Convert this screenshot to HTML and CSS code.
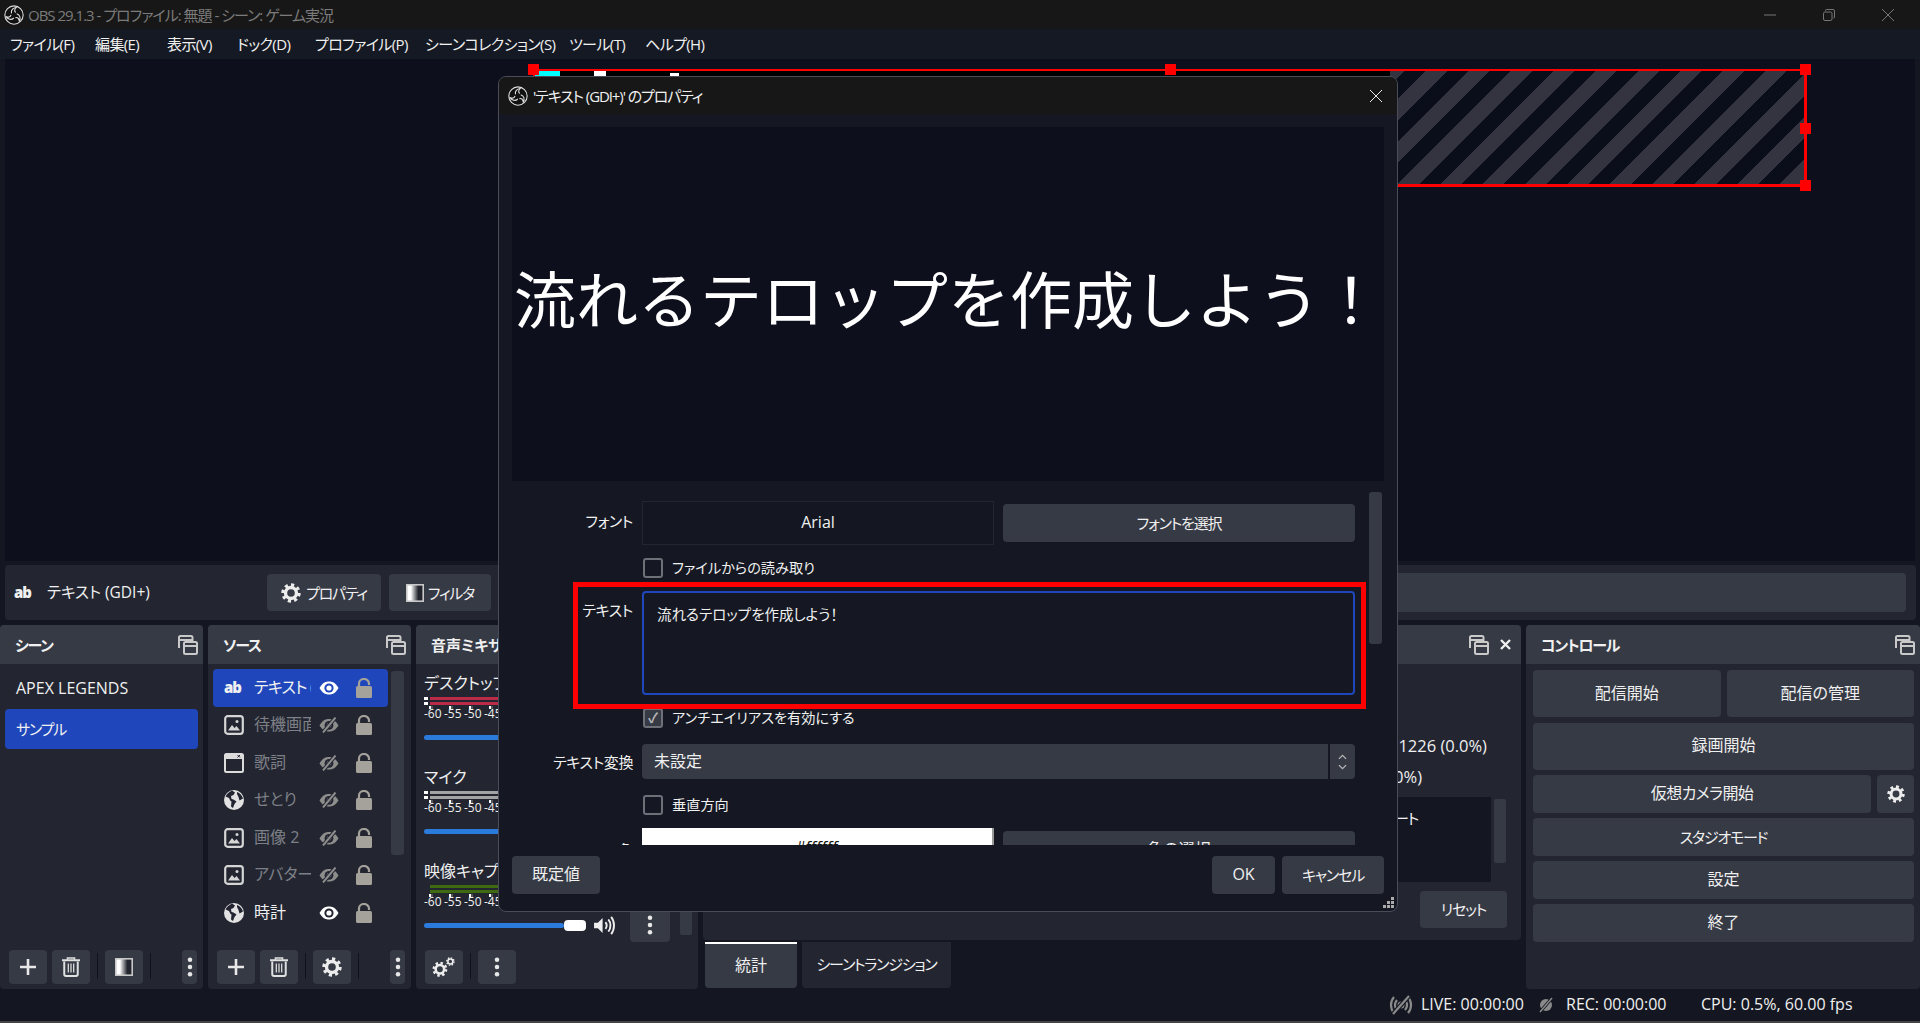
FILE: index.html
```html
<!DOCTYPE html>
<html lang="ja">
<head>
    <meta charset="UTF-8">
    <title>OBS 29.1.3</title>
    <link rel="stylesheet" href="styles.css">
</head>
<body>
    <svg class="sprite" aria-hidden="true">
        <defs>
            <linearGradient id="fade"><stop offset=".25" stop-color="#fff"/><stop offset=".7" stop-color="#23252e"/></linearGradient>
            <symbol id="i-obs" viewBox="0 0 24 24">
                <circle cx="12" cy="12" r="11" fill="#111" stroke="#ddd" stroke-width="1.3"/>
                <g fill="none" stroke="#ddd" stroke-width="1.3">
                    <path d="M9 10C8 6 11 3 15.5 2.6 12.5 4.5 12 7 14 9"/>
                    <path d="M9 10C8 6 11 3 15.5 2.6 12.5 4.5 12 7 14 9" transform="rotate(120 12 12)"/>
                    <path d="M9 10C8 6 11 3 15.5 2.6 12.5 4.5 12 7 14 9" transform="rotate(240 12 12)"/>
                </g>
            </symbol>
            <symbol id="i-popout" viewBox="0 0 20 20">
                <path d="M1 13V2.500A1.500 1.500 0 0 1 2.500 1H13A1.500 1.500 0 0 1 14.500 2.500V6M1 5H14.500" fill="none" stroke="#c9c9c9" stroke-width="2"/>
                <rect x="6" y="7" width="13" height="12" rx="1.500" fill="none" stroke="#c9c9c9" stroke-width="2"/>
                <path d="M6 11H19" stroke="#c9c9c9" stroke-width="2"/>
            </symbol>
            <symbol id="i-eye" viewBox="0 0 20 14">
                <path d="M.5 7C4 1 7 .5 10 .5S16 1 19.500 7C16 13 13 13.500 10 13.500S4 13 .5 7Z" fill="#fff"/>
                <circle cx="10" cy="7" r="4.600" fill="#1f47bb"/>
                <circle cx="10" cy="7" r="2.600" fill="#fff"/>
            </symbol>
            <symbol id="i-eye-dark" viewBox="0 0 20 14">
                <path d="M.5 7C4 1 7 .5 10 .5S16 1 19.500 7C16 13 13 13.500 10 13.500S4 13 .5 7Z" fill="#fff"/>
                <circle cx="10" cy="7" r="4.600" fill="#222531"/>
                <circle cx="10" cy="7" r="2.600" fill="#fff"/>
            </symbol>
            <symbol id="i-eye-off" viewBox="0 0 20 16">
                <path d="M.5 8.500C4 2.500 7 2 10 2S16 2.500 19.500 8.500C16 14 13 14.500 10 14.500S4 14 .5 8.500Z" fill="#8d8d8c"/>
                <circle cx="10" cy="8.300" r="4.400" fill="#222531"/>
                <circle cx="10" cy="8.300" r="2.400" fill="#8d8d8c"/>
                <path d="M4 15.500 16.500 .5" stroke="#222531" stroke-width="4"/>
                <path d="M4 15.500 16.500 .5" stroke="#8d8d8c" stroke-width="2"/>
            </symbol>
            <symbol id="i-lock" viewBox="0 0 16 20">
                <path d="M3 9V5.500a5 4.500 0 0 1 10 0V7" fill="none" stroke="#a5a29c" stroke-width="2.200"/>
                <rect y="8" width="16" height="12" rx="1.500" fill="#a5a29c"/>
            </symbol>
            <symbol id="i-image" viewBox="0 0 20 20">
                <rect x="1.200" y="1.200" width="17.600" height="17.600" rx="2.500" fill="none" stroke="#d5d5d5" stroke-width="2.200"/>
                <path d="M4 15.500 8 10l2.500 3 2-2 3.500 4.500Z" fill="#d5d5d5"/>
                <circle cx="13" cy="6.500" r="1.500" fill="#d5d5d5"/>
            </symbol>
            <symbol id="i-window" viewBox="0 0 20 20">
                <rect x="1" y="1" width="18" height="18" rx="1.500" fill="none" stroke="#dcdcdc" stroke-width="2"/>
                <path d="M1 1H19V6H1Z" fill="#dcdcdc"/>
                <path d="M13.500 2 16 4.500M16 2l-2.500 2.500" stroke="#222531"/>
            </symbol>
            <symbol id="i-globe" viewBox="0 0 20 20">
                <circle cx="10" cy="10" r="10" fill="#e2e2e2"/>
                <path d="M8 .5C5 2 3 3.500 1.500 6.500L5 8l1.500 3 1 .5-.5 5L9 18l1.500-4 2-2.500-3-2-2-.5L7 6l2.500-1L11 2.500ZM13 4l1.500 3 1 3.500 3.500-2C18 5.500 16 3 13 2Z" fill="#222531"/>
            </symbol>
            <symbol id="i-plus" viewBox="0 0 18 18">
                <path d="M9 1V17M1 9H17" stroke="#e8e8e8" stroke-width="2.600"/>
            </symbol>
            <symbol id="i-trash" viewBox="0 0 20 22">
                <path d="M0 3.500H20" stroke="#e0e0e0" stroke-width="2.200"/>
                <path d="M6 3V1H14V3" fill="none" stroke="#e0e0e0" stroke-width="1.600"/>
                <path d="M2.500 5V19a2 2 0 0 0 2 2H15.500a2 2 0 0 0 2-2V5" fill="none" stroke="#e0e0e0" stroke-width="2.200"/>
                <path d="M7 7V17M10 7V17M13 7V17" stroke="#e0e0e0" stroke-width="1.400"/>
            </symbol>
            <symbol id="i-filter" viewBox="0 0 18 18">
                <rect x=".8" y=".8" width="16.400" height="16.400" fill="url(#fade)" stroke="#c8c8c8" stroke-width="1.600"/>
            </symbol>
            <symbol id="i-gear" viewBox="0 0 20 20">
                <circle cx="10" cy="10" r="5.500" fill="none" stroke="#ececec" stroke-width="3.400"/>
                <circle cx="10" cy="10" r="8" fill="none" stroke="#ececec" stroke-width="3.400" pathLength="16" stroke-dasharray="1 1"/>
            </symbol>
            <symbol id="i-dots" viewBox="0 0 6 22">
                <circle cx="3" cy="3" r="2.500" fill="#e8e8e8"/>
                <circle cx="3" cy="11" r="2.500" fill="#e8e8e8"/>
                <circle cx="3" cy="19" r="2.500" fill="#e8e8e8"/>
            </symbol>
            <symbol id="i-speaker" viewBox="0 0 22 20">
                <path d="M0 7H4L9 2V18L4 13H0Z" fill="#eee"/>
                <path d="M12 6.500C13.500 8.500 13.500 11.500 12 13.500M15 3.500C18 7 18 13 15 16.500M18 1C22 6 22 14 18 19" fill="none" stroke="#eee" stroke-width="2"/>
            </symbol>
            <symbol id="i-live" viewBox="0 0 24 20">
                <path d="M5 2C1 6.500 1 13.500 5 18M8 5C5.500 8 5.500 12 8 15M19 2C23 6.500 23 13.500 19 18M16 5C18.500 8 18.500 12 16 15" fill="none" stroke="#8a8a8a" stroke-width="2.200"/>
                <circle cx="12" cy="10" r="3.500" fill="#8a8a8a"/>
                <path d="M4 19 20 1" stroke="#141722" stroke-width="4.500"/>
                <path d="M4 19 20 1" stroke="#8a8a8a" stroke-width="2.200"/>
            </symbol>
            <symbol id="i-rec" viewBox="0 0 14 16">
                <circle cx="7" cy="8" r="6" fill="#8a8a8a"/>
                <path d="M1 15 13 1" stroke="#141722" stroke-width="3"/>
                <path d="M1 15 13 1" stroke="#8a8a8a" stroke-width="1.500"/>
            </symbol>
        </defs>
    </svg>

    <div class="titlebar">
        <svg class="title-logo"><use href="#i-obs"/></svg>
        <span class="title-text">OBS 29.1.3 - プロファイル: 無題 - シーン: ゲーム実況</span>
        <div class="window-buttons">
            <svg viewBox="0 0 12 12"><path d="M0 6H12" stroke="#777" stroke-width="1"/></svg>
            <svg viewBox="0 0 12 12"><path d="M2.500 2V1.500a1 1 0 0 1 1-1H10a1.500 1.500 0 0 1 1.500 1.500V8a1 1 0 0 1-1 1" fill="none" stroke="#777"/><rect x=".5" y="3" width="8.500" height="8.500" rx="1.500" fill="none" stroke="#777"/></svg>
            <svg viewBox="0 0 12 12"><path d="M0 0 12 12M12 0 0 12" stroke="#777"/></svg>
        </div>
    </div>

    <nav class="menubar">
        <span>ファイル(F)</span>
        <span>編集(E)</span>
        <span>表示(V)</span>
        <span>ドック(D)</span>
        <span>プロファイル(P)</span>
        <span>シーンコレクション(S)</span>
        <span>ツール(T)</span>
        <span>ヘルプ(H)</span>
    </nav>

    <section class="preview">
        <div class="selection">
            <div class="source-text">
                <i class="bit bit-cyan"></i>
                <i class="bit bit-white-a"></i>
                <i class="bit bit-white-b"></i>
            </div>
            <i class="handle handle-tl"></i>
            <i class="handle handle-tm"></i>
            <i class="handle handle-tr"></i>
            <i class="handle handle-mr"></i>
            <i class="handle handle-br"></i>
        </div>
    </section>

    <section class="context-bar">
        <b class="ab-icon">ab</b>
        <span class="context-name">テキスト (GDI+)</span>
        <button class="btn btn-props"><svg class="ico-20"><use href="#i-gear"/></svg><span class="tight">プロパティ</span></button>
        <button class="btn btn-filter"><svg class="ico-18"><use href="#i-filter"/></svg><span class="tight">フィルタ</span></button>
        <div class="context-field"></div>
    </section>

    <main class="docks">
        <section class="dock dock-scenes">
            <header class="dock-head"><span class="tight">シーン</span><svg class="popout"><use href="#i-popout"/></svg></header>
            <div class="dock-body scene-list">
                <div class="scene">APEX LEGENDS</div>
                <div class="scene selected"><span class="tight">サンプル</span></div>
            </div>
            <div class="toolbar">
                <button class="tool"><svg class="ico-18"><use href="#i-plus"/></svg></button>
                <button class="tool"><svg class="ico-trash"><use href="#i-trash"/></svg></button>
                <i class="tool-sep"></i>
                <button class="tool"><svg class="ico-18"><use href="#i-filter"/></svg></button>
                <i class="tool-sep"></i>
                <button class="tool tool-dots"><svg class="ico-dots"><use href="#i-dots"/></svg></button>
            </div>
        </section>

        <section class="dock dock-sources">
            <header class="dock-head"><span class="tight">ソース</span><svg class="popout"><use href="#i-popout"/></svg></header>
            <div class="dock-body source-wrap">
                <div class="source-list">
                    <div class="source selected"><b class="ab-icon src-icon">ab</b><span class="src-name">テキスト (GDI+)</span><svg class="eye"><use href="#i-eye"/></svg><svg class="lock"><use href="#i-lock"/></svg></div>
                    <div class="source off"><svg class="src-icon"><use href="#i-image"/></svg><span class="src-name">待機画面</span><svg class="eye"><use href="#i-eye-off"/></svg><svg class="lock"><use href="#i-lock"/></svg></div>
                    <div class="source off"><svg class="src-icon"><use href="#i-window"/></svg><span class="src-name">歌詞</span><svg class="eye"><use href="#i-eye-off"/></svg><svg class="lock"><use href="#i-lock"/></svg></div>
                    <div class="source off"><svg class="src-icon"><use href="#i-globe"/></svg><span class="src-name">せとり</span><svg class="eye"><use href="#i-eye-off"/></svg><svg class="lock"><use href="#i-lock"/></svg></div>
                    <div class="source off"><svg class="src-icon"><use href="#i-image"/></svg><span class="src-name">画像 2</span><svg class="eye"><use href="#i-eye-off"/></svg><svg class="lock"><use href="#i-lock"/></svg></div>
                    <div class="source off"><svg class="src-icon"><use href="#i-image"/></svg><span class="src-name">アバター</span><svg class="eye"><use href="#i-eye-off"/></svg><svg class="lock"><use href="#i-lock"/></svg></div>
                    <div class="source"><svg class="src-icon"><use href="#i-globe"/></svg><span class="src-name">時計</span><svg class="eye"><use href="#i-eye-dark"/></svg><svg class="lock"><use href="#i-lock"/></svg></div>
                </div>
                <div class="source-scroll"></div>
            </div>
            <div class="toolbar">
                <button class="tool"><svg class="ico-18"><use href="#i-plus"/></svg></button>
                <button class="tool"><svg class="ico-trash"><use href="#i-trash"/></svg></button>
                <i class="tool-sep"></i>
                <button class="tool"><svg class="ico-20"><use href="#i-gear"/></svg></button>
                <i class="tool-sep"></i>
                <button class="tool tool-dots"><svg class="ico-dots"><use href="#i-dots"/></svg></button>
            </div>
        </section>

        <section class="dock dock-mixer">
            <header class="dock-head">音声ミキサー</header>
            <div class="dock-body mixer-body">
                <div class="channel">
                    <div class="ch-name">デスクトップ音声</div>
                    <div class="meter meter-red"><i></i><i></i></div>
                    <div class="ticks"></div>
                    <div class="scale"><span>-60</span><span>-55</span><span>-50</span><span>-45</span></div>
                    <div class="fader"><i class="fader-track"></i></div>
                </div>
                <div class="channel">
                    <div class="ch-name">マイク</div>
                    <div class="meter meter-gray"><i></i><i></i></div>
                    <div class="ticks"></div>
                    <div class="scale"><span>-60</span><span>-55</span><span>-50</span><span>-45</span></div>
                    <div class="fader"><i class="fader-track"></i></div>
                </div>
                <div class="channel">
                    <div class="ch-name">映像キャプチャ</div>
                    <div class="meter meter-green"><i></i><i></i></div>
                    <div class="ticks"></div>
                    <div class="scale"><span>-60</span><span>-55</span><span>-50</span><span>-45</span></div>
                    <div class="fader">
                        <i class="fader-track"></i><i class="fader-knob"></i>
                        <svg class="speaker"><use href="#i-speaker"/></svg>
                        <button class="tool fader-menu"><svg class="ico-dots"><use href="#i-dots"/></svg></button>
                        <i class="mixer-scroll"></i>
                    </div>
                </div>
            </div>
            <div class="toolbar">
                <button class="tool"><svg class="ico-gears" viewBox="0 0 26 22"><use href="#i-gear" width="17" height="17" y="5"/><use href="#i-gear" width="10" height="10" x="15"/></svg></button>
                <i class="tool-sep"></i>
                <button class="tool"><svg class="ico-dots"><use href="#i-dots"/></svg></button>
            </div>
        </section>

        <div class="center-col">
            <section class="dock dock-stats">
                <header class="dock-head">統計<svg class="popout popout-stats"><use href="#i-popout"/></svg><svg class="close-x" viewBox="0 0 11 11"><path d="M1 1 10 10M10 1 1 10" stroke="#eee" stroke-width="2.400"/></svg></header>
                <div class="stats-body">
                    <div class="stat stat-a">スキップされたフレーム 0 / 1226 (0.0%)</div>
                    <div class="stat stat-b">0 / 1226 (0.0%)</div>
                    <div class="stats-list-row">
                        <div class="stats-list"><span class="tight">出力ビットレート</span></div>
                        <i class="stats-scroll"></i>
                    </div>
                    <div class="stats-foot"><button class="btn btn-reset"><span class="tight">リセット</span></button></div>
                </div>
            </section>
            <div class="tabs">
                <button class="tab active">統計</button>
                <button class="tab"><span class="tight">シーントランジション</span></button>
            </div>
        </div>

        <section class="dock dock-controls">
            <header class="dock-head"><span class="tight">コントロール</span><svg class="popout"><use href="#i-popout"/></svg></header>
            <div class="controls">
                <div class="ctrl-row">
                    <button class="btn ctrl ctrl-tall">配信開始</button>
                    <button class="btn ctrl ctrl-tall">配信の管理</button>
                </div>
                <button class="btn ctrl ctrl-tall">録画開始</button>
                <div class="ctrl-row">
                    <button class="btn ctrl ctrl-cam">仮想カメラ開始</button>
                    <button class="btn ctrl-gear"><svg class="ico-18"><use href="#i-gear"/></svg></button>
                </div>
                <button class="btn ctrl"><span class="tight">スタジオモード</span></button>
                <button class="btn ctrl">設定</button>
                <button class="btn ctrl">終了</button>
            </div>
        </section>
    </main>

    <footer class="statusbar">
        <svg class="st-live"><use href="#i-live"/></svg>
        <span class="st-live-text">LIVE: 00:00:00</span>
        <svg class="st-rec"><use href="#i-rec"/></svg>
        <span class="st-rec-text">REC: 00:00:00</span>
        <span class="st-cpu">CPU: 0.5%, 60.00 fps</span>
    </footer>

    <div class="dialog">
        <header class="dialog-title">
            <svg class="dialog-logo"><use href="#i-obs"/></svg>
            <span class="dialog-name">'テキスト (GDI+)' のプロパティ</span>
            <svg class="dialog-close" viewBox="0 0 12 12"><path d="M0 0 12 12M12 0 0 12" stroke="#eee"/></svg>
        </header>
        <div class="dialog-preview">流れるテロップを作成しよう！</div>
        <div class="dialog-form">
            <div class="form-grid">
                <label class="form-label label-font">フォント</label>
                <div class="field-pair">
                    <div class="font-box">Arial</div>
                    <button class="btn btn-pick"><span class="tight">フォントを選択</span></button>
                </div>
                <span></span>
                <div class="check"><i class="box"></i>ファイルからの読み取り</div>
                <label class="form-label label-top">テキスト</label>
                <div class="text-area">流れるテロップを作成しよう！</div>
                <span></span>
                <div class="check"><i class="box checked">✓</i>アンチエイリアスを有効にする</div>
                <label class="form-label">テキスト変換</label>
                <div class="select-wrap">
                    <div class="select">未設定</div>
                    <div class="select-arrows">
                        <svg viewBox="0 0 10 18"><path d="M1 5.500 5 1.500 9 5.500M1 12.500 5 16.500 9 12.500" fill="none" stroke="#b5b5b5" stroke-width="1.500"/></svg>
                    </div>
                </div>
                <span></span>
                <div class="check"><i class="box"></i>垂直方向</div>
                <label class="form-label">色</label>
                <div class="field-pair field-color">
                    <div class="color-box">#ffffff</div>
                    <button class="btn btn-pick">色の選択</button>
                </div>
            </div>
            <i class="form-scroll"></i>
        </div>
        <div class="dialog-foot">
            <button class="btn btn-defaults">既定値</button>
            <button class="btn btn-ok">OK</button>
            <button class="btn btn-cancel"><span class="tight">キャンセル</span></button>
        </div>
        <svg class="grip" viewBox="0 0 11 11"><path d="M8 0h3v3H8ZM4 4h3v3H4ZM8 4h3v3H8ZM0 8h3v3H0ZM4 8h3v3H4ZM8 8h3v3H8Z" fill="#aaa"/></svg>
        <i class="red-frame"></i>
    </div>
</body>
</html>
```
FILE: styles.css
```css
*
{
    margin:0;
    padding:0;
    box-sizing:border-box;
}
body
{
    width:1920px;
    height:1023px;
    overflow:hidden;
    display:flex;
    flex-direction:column;
    position:relative;
    background:#141722;
    color:#f0f0f0;
    font-family:"Open Sans","Noto Sans CJK JP",sans-serif;
    font-size:16px;
    font-feature-settings:"palt";
    line-height:1.2;
}
button
{
    font:inherit;
    font-feature-settings:inherit;
    color:inherit;
    border:0;
    background:none;
}
i{ font-style:normal; display:block; }
.sprite{ width:0; height:0; display:block; }
.tight{ font-size:15px; letter-spacing:-1.2px; }

/* title + menu */
.titlebar
{
    height:29px;
    flex:none;
    display:flex;
    align-items:center;
    background:#171717;
    padding-left:4px;
}
.title-logo{ width:20px; height:20px; }
.title-text{ margin-left:4px; color:#7b7b7b; font-size:15px; letter-spacing:-1px; }
.window-buttons
{
    margin-left:auto;
    display:flex;
    gap:47px;
    padding-right:26px;
}
.window-buttons svg{ width:12px; height:12px; }
.menubar
{
    height:30px;
    flex:none;
    display:grid;
    grid-template-columns:85px 72px 70px 78px 110px 144px 76px auto;
    justify-content:start;
    align-items:center;
    padding-left:10px;
    background:#151923;
    font-size:15px;
    letter-spacing:-.6px;
}

/* preview */
.preview
{
    height:502px;
    flex:none;
    margin:0 5px;
    position:relative;
    background:#0d0f1c;
}
.selection
{
    position:absolute;
    left:528px;
    top:10px;
    width:1274px;
    height:118px;
    border:solid #f00;
    border-width:2px 3px 3px 2px;
    background:repeating-linear-gradient(135deg,#33343f 0 15px,#0a0d1a 15px 30px);
}
.source-text{ width:855px; height:100%; background:#000; position:relative; }
.bit{ position:absolute; top:0; height:6px; }
.bit-cyan{ left:0; width:25px; background:#0ff; }
.bit-white-a{ left:59px; width:12px; background:#fff; }
.bit-white-b{ left:135px; width:9px; top:2px; background:#fff; }
.handle{ position:absolute; width:11px; height:11px; background:#f00; }
.handle-tl{ left:-7px; top:-7px; }
.handle-tm{ left:630px; top:-7px; }
.handle-tr{ right:-7px; top:-7px; }
.handle-mr{ right:-7px; top:52px; }
.handle-br{ right:-7px; bottom:-7px; }

/* context bar */
.context-bar
{
    height:55px;
    flex:none;
    margin:4px 4px 5px 5px;
    display:flex;
    align-items:center;
    border-radius:4px;
    background:#232631;
    padding:0 10px 0 9px;
}
.ab-icon{ font-size:15px; font-weight:800; letter-spacing:-1px; line-height:1; }
.context-name{ margin-left:16px; width:220px; font-size:15.500px; }
.btn
{
    display:flex;
    align-items:center;
    justify-content:center;
    background:#363a45;
    border-radius:4px;
}
.btn-props{ width:114px; height:37px; gap:5px; }
.btn-filter{ width:102px; height:37px; gap:4px; margin-left:8px; }
.context-field{ flex:1; height:39px; margin-left:8px; border-radius:4px; background:#363a45; }
.ico-20{ width:20px; height:20px; }
.ico-18{ width:18px; height:18px; }
.ico-trash{ width:18px; height:20px; }
.ico-dots{ width:6px; height:20px; }
.ico-gears{ width:24px; height:20px; }

/* docks */
.docks
{
    height:364px;
    flex:none;
    display:flex;
    gap:5px;
}
.dock
{
    display:flex;
    flex-direction:column;
    background:#232631;
    border-radius:4px;
    overflow:hidden;
}
.dock-head
{
    height:39px;
    flex:none;
    display:flex;
    align-items:center;
    padding-left:15px;
    background:#363a45;
    font-weight:700;
    font-size:15px;
}
.popout{ width:20px; height:20px; margin-left:auto; margin-right:5px; }
.dock-body{ flex:1; min-height:0; }
.dock-scenes{ width:203px; }
.dock-sources{ width:203px; }
.dock-mixer{ width:282px; }
.center-col{ width:818px; display:flex; flex-direction:column; }
.dock-controls{ flex:1; }
.toolbar
{
    height:39px;
    flex:none;
    display:flex;
    align-items:flex-start;
    gap:5px;
    padding-left:9px;
}
.tool
{
    width:38px;
    height:34px;
    display:flex;
    align-items:center;
    justify-content:center;
    border-radius:4px;
    background:#363a45;
}
.tool-sep{ width:1px; height:26px; background:#10121a; margin:3px 2px 0; }
.tool-dots{ width:15px; margin-left:auto; margin-right:6px; }

/* scenes */
.scene-list{ padding:5px 5px 0; }
.scene
{
    height:40px;
    display:flex;
    align-items:center;
    padding-left:11px;
    border-radius:4px;
}
.scene.selected{ background:#1f47bb; }

/* sources */
.source-wrap{ display:flex; padding:5px 5px 0; }
.source-list{ width:175px; }
.source
{
    height:37.500px;
    display:flex;
    align-items:center;
    padding-left:11px;
    border-radius:4px;
}
.source.selected{ background:#1f47bb; }
.src-icon{ width:20px; height:20px; flex:none; }
b.src-icon{ height:auto; }
.src-name{ width:57px; margin-left:10px; overflow:hidden; white-space:nowrap; line-height:1.6; }
.source.selected .src-name{ letter-spacing:-.8px; }
.source.off .src-name{ color:#7e8087; }
.eye{ width:20px; height:16px; margin-left:8px; flex:none; }
.lock{ width:16px; height:20px; margin-left:17px; flex:none; }
.source-scroll{ width:13px; height:184px; margin:2px 0 0 3px; border-radius:3px; background:#363a45; }

/* mixer */
.mixer-body{ padding:10px 5px 0 8px; }
.channel{ height:94px; }
.ch-name{ height:20px; white-space:nowrap; line-height:19px; }
.meter{ height:8px; margin:3px 0 0 6px; display:flex; flex-direction:column; gap:2px; overflow:hidden; position:relative; }
.meter i{ height:3px; width:300px; flex:none; }
.meter-red i{ background:#b92b47; }
.meter-gray i{ background:#a3a3a3; }
.meter-green i{ background:#3e6b10; }
/* peak markers left of the bars */
.meter-red, .meter-gray{ overflow:visible; }
.meter-red::before, .meter-gray::before
{
    content:"";
    position:absolute;
    left:-6px;
    top:0;
    width:4px;
    height:8px;
    background:linear-gradient(#fff 0 3px,transparent 3px 5px,#fff 5px);
}
.ticks
{
    height:3px;
    margin:1px 0 0 5px;
    background:repeating-linear-gradient(90deg,#fff 0 2px,#555 2px 4px,transparent 4px 20px);
}
.scale{ display:flex; font-size:12px; margin-top:-2px; white-space:nowrap; }
.scale span{ width:20px; flex:none; }
.fader{ display:flex; align-items:center; height:16px; margin-top:8px; }
.fader-track{ width:140px; height:5px; border-radius:3px; background:#2a7bdc; }
.fader-knob{ width:22px; height:11px; border-radius:4px; background:#fff; }
.speaker{ width:21px; height:19px; margin-left:8px; flex:none; }
.fader-menu{ margin-left:15px; width:40px; height:34px; flex:none; }
.mixer-scroll{ width:12px; height:30px; margin:-10px 0 0 10px; border-radius:2px; background:#363a45; flex:none; }

/* stats */
.dock-stats{ height:315px; }
.popout-stats{ margin-right:11px; }
.close-x{ width:11px; height:11px; margin-right:10px; }
.stats-body{ flex:1; display:flex; flex-direction:column; }
.stat{ text-align:right; font-size:16.500px; white-space:nowrap; }
.stat-a{ margin:72px 34px 0 0; }
.stat-b{ margin:11px 99px 0 0; }
.stats-list-row{ display:flex; justify-content:flex-end; margin:10px 15px 0 0; height:85px; }
.stats-list{ width:300px; background:#141722; text-align:right; padding:12px 73px 0 0; white-space:nowrap; }
.stats-scroll{ width:12px; height:64px; margin:2px 0 0 3px; border-radius:2px; background:#363a45; }
.stats-foot{ display:flex; justify-content:flex-end; padding:9px 14px 0 0; }
.btn-reset{ width:87px; height:37px; }
.tabs{ display:flex; gap:5px; margin:2px 0 0 2px; }
.tab{ height:46px; width:149px; border-radius:0 0 4px 4px; background:#232631; }
.tab.active{ width:92px; background:#363a45; border-top:2px solid #fff; }

/* controls */
.controls{ padding:6px 6px 0 7px; display:flex; flex-direction:column; gap:5.500px; }
.ctrl-row{ display:flex; gap:6px; }
.ctrl{ height:37.500px; width:100%; }
.ctrl-row .ctrl{ flex:1; width:auto; }
.ctrl-tall{ height:47px; }
.ctrl-cam{ letter-spacing:-.6px; }
.ctrl-gear{ width:37px; height:37.500px; flex:none; }

/* status */
.statusbar
{
    flex:1;
    display:flex;
    align-items:center;
    border-bottom:2px solid #444;
}
.st-live{ width:24px; height:20px; margin-left:1389px; }
.st-live-text{ margin-left:8px; width:105px; white-space:nowrap; }
.st-rec{ width:14px; height:16px; margin-left:13px; }
.st-rec-text{ margin-left:13px; width:102px; white-space:nowrap; }
.st-cpu{ margin-left:33px; white-space:nowrap; }

/* properties dialog */
.dialog
{
    position:absolute;
    left:498px;
    top:76px;
    width:900px;
    height:836px;
    display:flex;
    flex-direction:column;
    background:#151822;
    border:1px solid #4a4c57;
    border-radius:8px;
    overflow:hidden;
}
.dialog-title
{
    height:37px;
    flex:none;
    display:flex;
    align-items:center;
    padding-left:9px;
    background:#171717;
}
.dialog-name{ font-size:15px; letter-spacing:-1.1px; }
.dialog-logo{ width:20px; height:20px; margin-right:5px; }
.dialog-close{ width:12px; height:12px; margin-left:auto; margin-right:15px; }
.dialog-preview
{
    height:354px;
    flex:none;
    margin:13px 13px 1px 13px;
    display:flex;
    align-items:center;
    justify-content:center;
    padding-bottom:14px;
    background:#0d0f1c;
    color:#fff;
    font-family:"Noto Sans CJK JP",sans-serif;
    font-feature-settings:normal;
    font-size:62px;
    white-space:nowrap;
}
.dialog-form
{
    height:363px;
    flex:none;
    display:flex;
    overflow:hidden;
    padding-top:19px;
}
.form-grid
{
    width:856px;
    display:grid;
    grid-template-columns:134px 713px;
    column-gap:9px;
    grid-template-rows:44px 22px 104px 22px 41px 22px 44px;
    row-gap:12px;
    align-items:center;
}
.form-label{ text-align:right; font-size:15px; letter-spacing:-.4px; }
.label-font{ padding-bottom:4px; }
.label-top{ align-self:start; padding-top:10px; }
.field-pair{ display:flex; gap:9px; height:100%; align-items:center; }
.font-box
{
    width:352px;
    height:44px;
    display:flex;
    align-items:center;
    justify-content:center;
    border:1px solid #232631;
    background:#141722;
}
.btn-pick{ width:352px; height:38px; }
.check{ display:flex; align-items:center; gap:9px; font-size:14.200px; }
.box
{
    width:20px;
    height:20px;
    border:2px solid #6e7078;
    border-radius:3px;
    margin-left:1px;
    display:flex;
    align-items:center;
    justify-content:center;
    color:#b5b5b5;
    font-size:14px;
    font-weight:700;
}
.box.checked{ background:#363a45; }
.text-area
{
    height:104px;
    padding:13px 13px;
    border:2px solid #1f47bb;
    border-radius:4px;
    font-size:14.500px;
}
.select-wrap{ display:flex; height:35px; gap:2px; }
.select
{
    flex:1;
    display:flex;
    align-items:center;
    padding-left:12px;
    background:#363a45;
    border-radius:4px 0 0 4px;
}
.select-arrows
{
    width:25px;
    display:flex;
    align-items:center;
    justify-content:center;
    background:#363a45;
    border-radius:0 4px 4px 0;
}
.select-arrows svg{ width:9px; height:16px; }
.field-color{ align-items:flex-start; }
.color-box
{
    width:352px;
    height:44px;
    background:#fff;
    color:#111;
    text-align:center;
    padding-top:10px;
    border-right:2px solid #999;
}
.field-color .btn-pick{ margin-top:3px; }
.form-scroll{ width:13px; height:152px; margin:-9px 0 0 14px; border-radius:3px; background:#363a45; }
.dialog-foot
{
    flex:1;
    display:flex;
    align-items:flex-start;
    gap:7px;
    padding:11px 13px 0 13px;
}
.btn-defaults{ width:88px; height:38px; margin-right:auto; }
.btn-ok{ width:63px; height:38px; }
.btn-cancel{ width:102px; height:38px; }
.grip{ position:absolute; right:3px; bottom:3px; width:11px; height:11px; }
.red-frame
{
    position:absolute;
    left:74px;
    top:505px;
    width:793px;
    height:127px;
    border:5px solid #f00;
}
```
